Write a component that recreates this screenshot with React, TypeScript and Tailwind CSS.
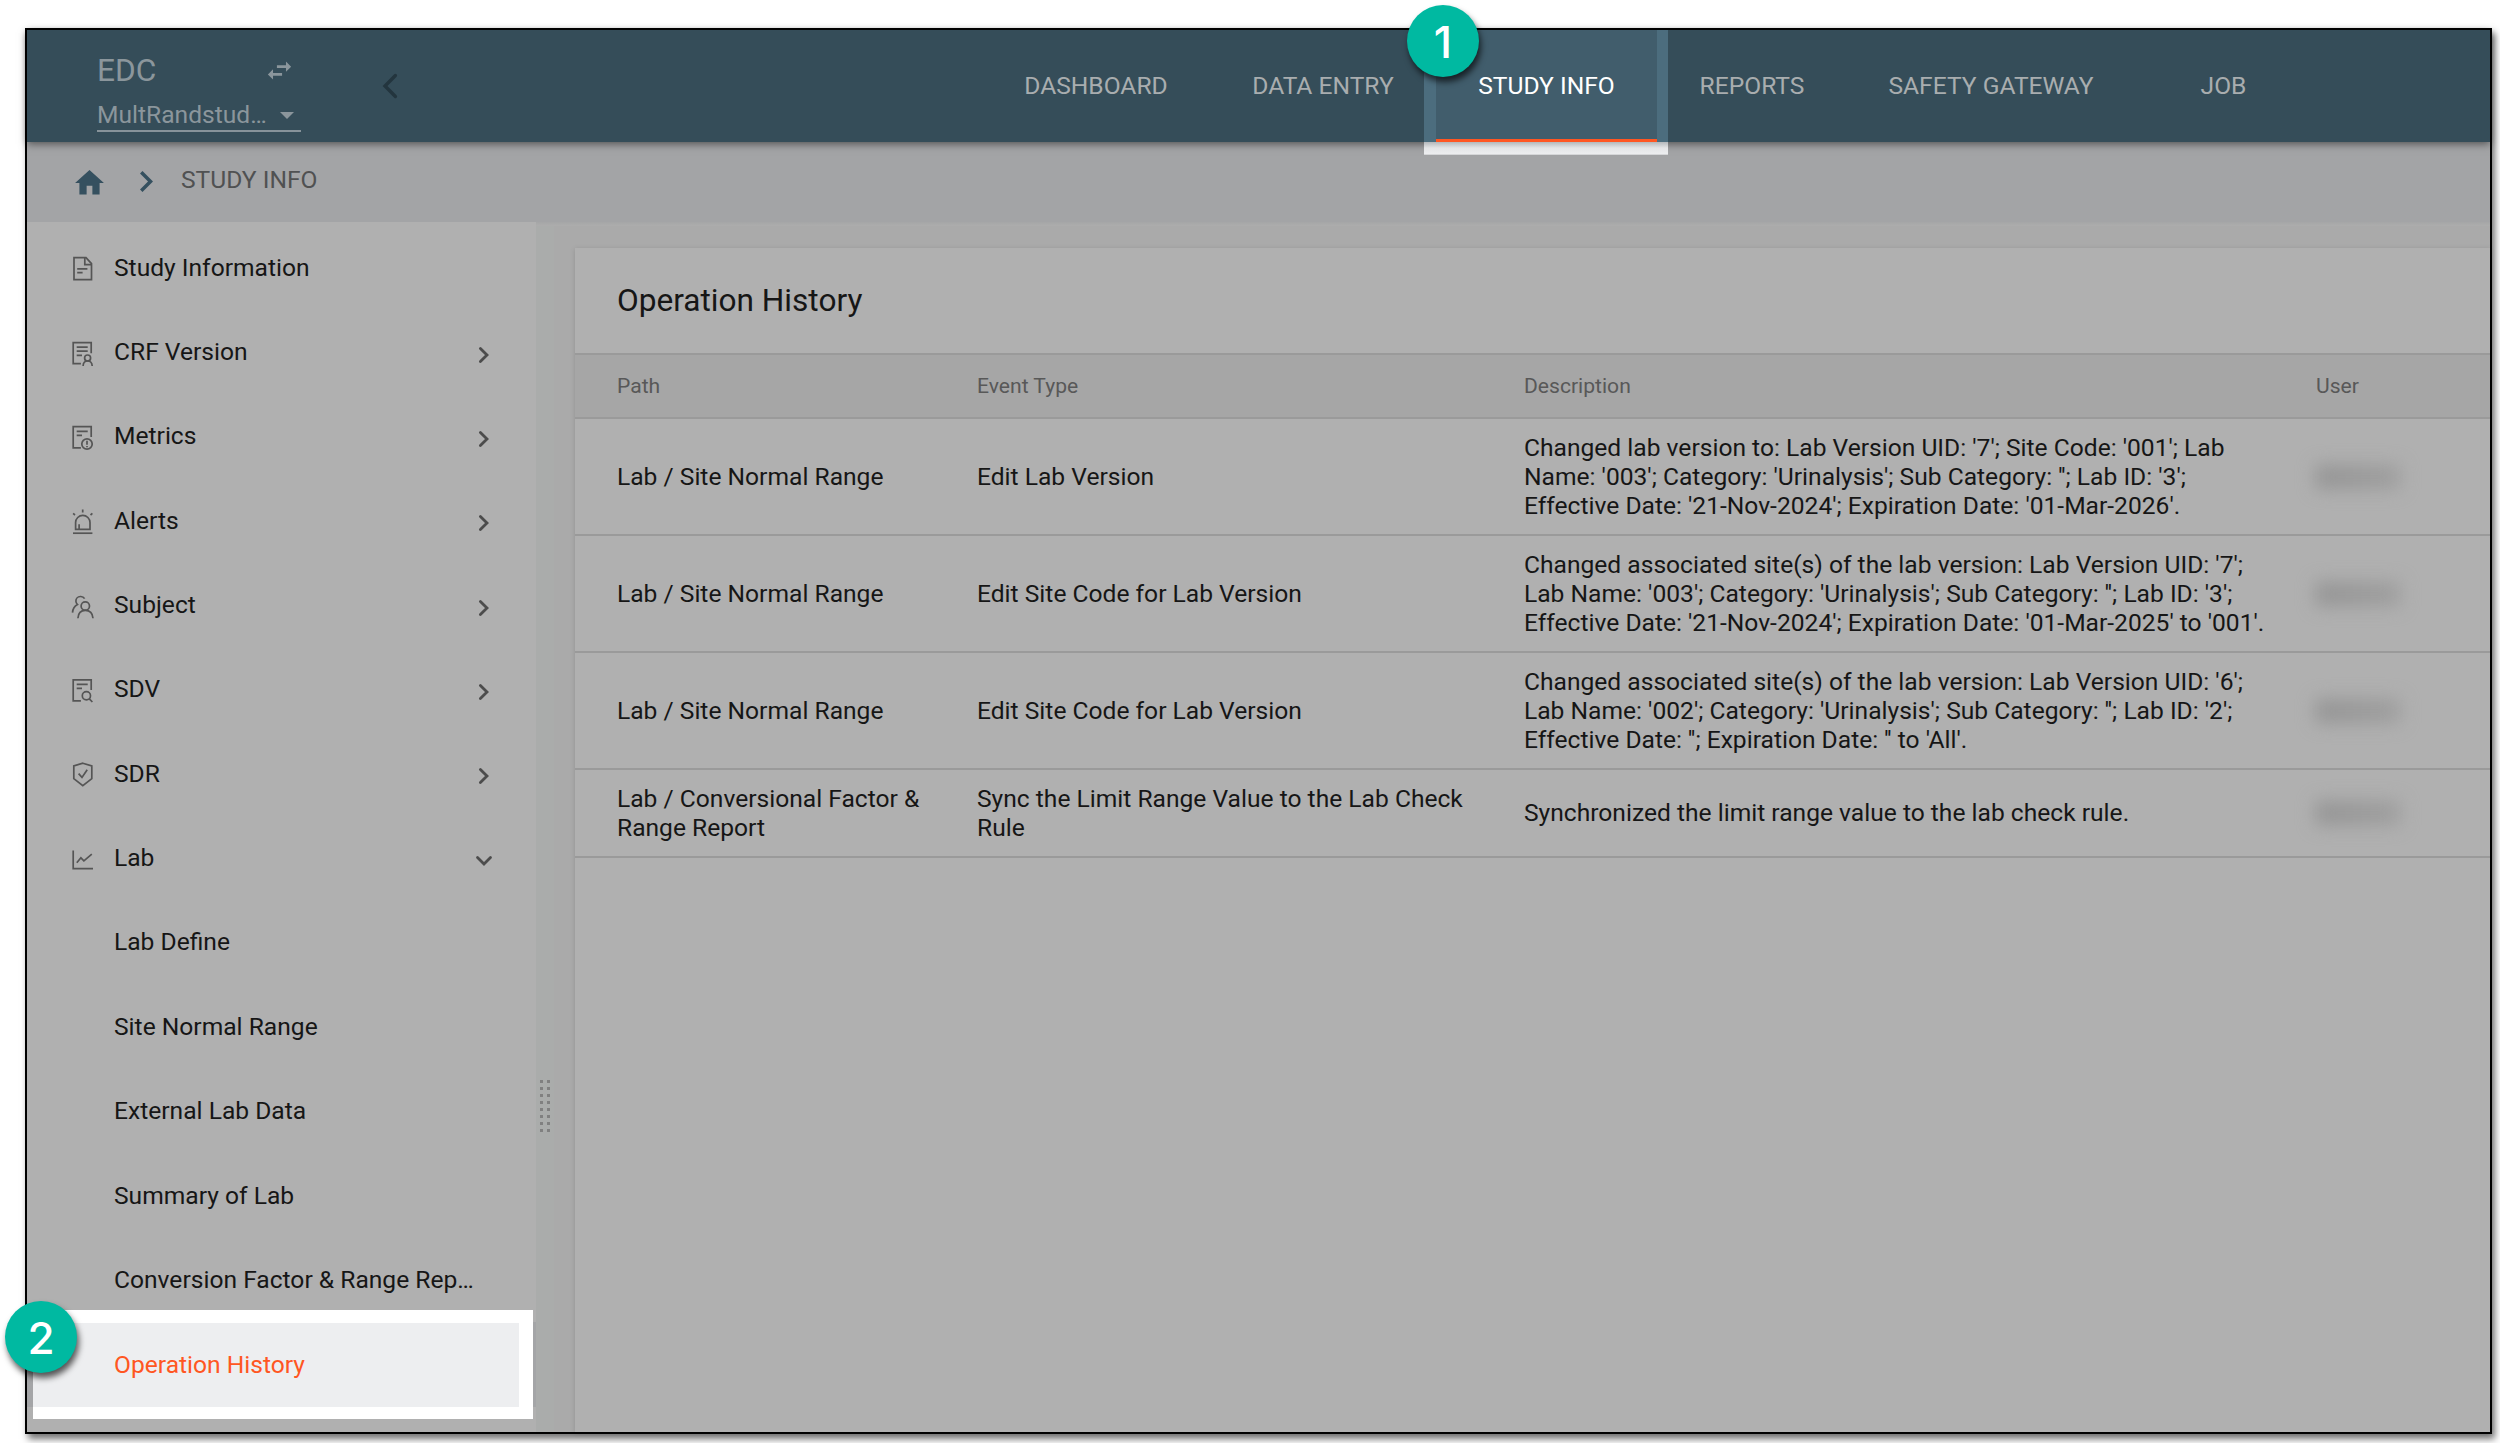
import type { ReactNode } from "react";

const navTabs = [
  { label: "DASHBOARD", width: "w-[228px]" },
  { label: "DATA ENTRY", width: "w-[226px]" },
  { label: "STUDY INFO", width: "w-[221px]", active: true },
  { label: "REPORTS", width: "w-[190px]" },
  { label: "SAFETY GATEWAY", width: "w-[288px]" },
  { label: "JOB", width: "w-[177px]" },
];

const icons: Record<string, ReactNode> = {
  document: (
    <>
      <path d="M3 3.7H15L20.5 9.7V25.6H3Z" />
      <path d="M13.8 3.9V10.6H20.3" />
      <path d="M6.2 14.8H16.4M6.2 18.6H11.6" />
    </>
  ),
  crf: (
    <>
      <path d="M20.2 14.2V3.6H2.2V24.6H9.9" />
      <path d="M5.7 8.2H16.7M5.7 12.2H16.7M5.7 16.3H11" />
      <circle cx="16.6" cy="19" r="3" />
      <path d="M12.1 27C12.2 23.6 14 22 16.6 22S21 23.6 21.2 27" />
    </>
  ),
  metrics: (
    <>
      <path d="M20.2 14V3.6H2.2V24.8H9.9" />
      <path d="M5.7 8.3H16.7M5.7 12.4H11" />
      <circle cx="16" cy="21" r="5.2" />
      <path d="M16 17.8V21.7M16 22.9V24.3" />
    </>
  ),
  alerts: (
    <>
      <path d="M2 26.2H21.4" />
      <path d="M4.6 22.4V15.6A7.2 7.2 0 0 1 19 15.6V22.4Z" />
      <path d="M8.1 17.2V22M11.7 2.6V5.6M2.1 6.4L4 8M21.4 6.4L19.5 8" />
    </>
  ),
  subject: (
    <>
      <path d="M13.6 6.6C12.6 4.9 10.9 4.4 9.4 4.5C6.6 4.7 4.8 6.8 4.9 9.2C5 10.6 5.6 11.7 6.5 12.6C3.6 14.2 1.8 17 1.5 20.6" />
      <circle cx="14.3" cy="14" r="4.2" />
      <path d="M6.9 26.2C7.2 21.2 10 18.3 14.3 18.3S21.6 21.2 22 26.2" />
    </>
  ),
  sdv: (
    <>
      <path d="M20.2 14V3.8H2.2V24.8H9.9" />
      <path d="M5.7 8.4H16.7M5.7 12.4H11" />
      <circle cx="15.4" cy="19.8" r="4.1" />
      <path d="M18.3 22.8L21.4 26" />
    </>
  ),
  sdr: (
    <>
      <path d="M11.8 3.2L20.8 6V18.6L11.8 25.7L2.8 18.6V6Z" />
      <path d="M7.6 13.6L11 17.4L16.2 9.8" />
    </>
  ),
  lab: (
    <>
      <path d="M2.2 5.6V23.6H22" />
      <path d="M5.8 17.8L9.9 12.8L12.9 15.8L20.8 9.2" />
    </>
  ),
};

const menu = [
  { label: "Study Information", icon: "document" },
  { label: "CRF Version", icon: "crf", arrow: "right" },
  { label: "Metrics", icon: "metrics", arrow: "right" },
  { label: "Alerts", icon: "alerts", arrow: "right" },
  { label: "Subject", icon: "subject", arrow: "right" },
  { label: "SDV", icon: "sdv", arrow: "right" },
  { label: "SDR", icon: "sdr", arrow: "right" },
  { label: "Lab", icon: "lab", arrow: "down" },
  { label: "Lab Define" },
  { label: "Site Normal Range" },
  { label: "External Lab Data" },
  { label: "Summary of Lab" },
  { label: "Conversion Factor & Range Rep…" },
];

const rows = [
  {
    path: "Lab / Site Normal Range",
    event: "Edit Lab Version",
    description:
      "Changed lab version to: Lab Version UID: '7'; Site Code: '001'; Lab Name: '003'; Category: 'Urinalysis'; Sub Category: ''; Lab ID: '3'; Effective Date: '21-Nov-2024'; Expiration Date: '01-Mar-2026'.",
  },
  {
    path: "Lab / Site Normal Range",
    event: "Edit Site Code for Lab Version",
    description:
      "Changed associated site(s) of the lab version: Lab Version UID: '7'; Lab Name: '003'; Category: 'Urinalysis'; Sub Category: ''; Lab ID: '3'; Effective Date: '21-Nov-2024'; Expiration Date: '01-Mar-2025' to '001'.",
  },
  {
    path: "Lab / Site Normal Range",
    event: "Edit Site Code for Lab Version",
    description:
      "Changed associated site(s) of the lab version: Lab Version UID: '6'; Lab Name: '002'; Category: 'Urinalysis'; Sub Category: ''; Lab ID: '2'; Effective Date: ''; Expiration Date: '' to 'All'.",
  },
  {
    path: "Lab / Conversional Factor & Range Report",
    event: "Sync the Limit Range Value to the Lab Check Rule",
    description: "Synchronized the limit range value to the lab check rule.",
  },
];

function StepBadge({ children, className }: { children: ReactNode; className: string }) {
  return (
    <div
      className={`absolute z-30 flex size-[72px] items-center justify-center rounded-full bg-[#00b9a1] pt-[2px] font-['Inter'] text-[44px] font-medium leading-none text-white shadow-[2px_5px_6px_rgba(0,0,0,0.65)] ${className}`}
    >
      {children}
    </div>
  );
}

function Header() {
  return (
    <header className="relative z-10 flex h-[112px] shrink-0 bg-[#354d59] shadow-[0_2px_8px_rgba(0,0,0,0.5)]">
      <div className="ml-[70px] mt-[20px] w-[204px] text-[#8b969c]">
        <div className="flex h-[41px] items-center justify-between">
          <span className="text-[31.6px] leading-none">EDC</span>
          <svg viewBox="0 0 24 24" className="mr-[6px] size-[31px] fill-current">
            <path d="M6.99 11L3 15l3.99 4v-3H14v-2H6.99v-3zM21 9l-3.99-4v3H10v2h7.01v3L21 9z" />
          </svg>
        </div>
        <div className="mt-[7px] flex h-[34px] items-center justify-between border-b-2 border-[#87939a] pt-[2px]">
          <span className="text-[24.6px] leading-none">MultRandstud…</span>
          <svg viewBox="0 0 14 7" className="mr-[7px] h-[7px] w-[14px] fill-current">
            <path d="M0 0H14L7 7Z" />
          </svg>
        </div>
      </div>
      <svg
        viewBox="0 0 16 26"
        className="ml-[81px] mt-[43px] h-[26px] w-4 fill-none stroke-[#23353e] stroke-[3.4]"
        strokeLinecap="round"
      >
        <path d="M13.4 2.5L3 13L13.4 23.5" />
      </svg>
      <nav className="ml-[584px] flex">
        {navTabs.map((tab) =>
          tab.active ? (
            <div key={tab.label} className={`relative ${tab.width}`}>
              <div className="absolute -left-3 top-0 h-[112px] w-[244px] bg-[#4c6d7e]" />
              <div className="absolute -left-3 top-[112px] h-[13px] w-[244px] border-b border-[#d5d6d8] bg-linear-to-b from-[#b4b8bb] via-[#e4e5e7] to-[#edeef0]" />
              <div className="relative flex h-[112px] items-center justify-center border-b-[3px] border-[#ff5622] bg-[#415d6c] pt-[3px] text-[24.6px] text-white">
                {tab.label}
              </div>
            </div>
          ) : (
            <div
              key={tab.label}
              className={`flex items-center justify-center text-[24.6px] text-[#a9adaf] ${tab.width}`}
            >
              {tab.label}
            </div>
          )
        )}
      </nav>
    </header>
  );
}

function Breadcrumb() {
  return (
    <div className="flex h-[80px] shrink-0 items-start bg-[#a3a4a6]">
      <svg viewBox="2 3 20 17" className="ml-[48px] mt-[28px] h-[24.5px] w-[29px] fill-[#35505f]">
        <path d="M10 20v-6h4v6h5v-8h3L12 3 2 12h3v8z" />
      </svg>
      <svg viewBox="8.59 6 7.41 12" className="ml-[36px] mt-[29px] h-[21px] w-[13px] fill-[#35505f]">
        <path d="M10 6 8.59 7.41 13.17 12l-4.58 4.59L10 18l6-6z" />
      </svg>
      <span className="ml-[28px] mt-[23px] text-[24.6px] leading-[29px] text-[#505152]">STUDY INFO</span>
    </div>
  );
}

function Sidebar() {
  return (
    <aside className="flex w-[509px] shrink-0 flex-col bg-[#b0b0b0] pt-[4px]">
      {menu.map((item) => (
        <div key={item.label} className="flex h-[84.35px] shrink-0 items-center">
          <div className="ml-[44px] w-[43px]">
            {item.icon && (
              <svg viewBox="0 0 24 28" className="h-7 w-6 fill-none stroke-[#555] stroke-[1.7]">
                {icons[item.icon]}
              </svg>
            )}
          </div>
          <span className="text-[24.6px] text-[#161616]">{item.label}</span>
          {item.arrow && (
            <svg
              viewBox="0 0 18 18"
              className="ml-auto mr-[43px] mt-[4px] size-[18px] fill-none stroke-[#4c4c4c] stroke-[2.8]"
              strokeLinecap="round"
            >
              {item.arrow === "right" ? <path d="M5.4 2.5L12 9L5.4 15.5" /> : <path d="M2.5 5.5L9 12L15.5 5.5" />}
            </svg>
          )}
        </div>
      ))}
      <div className="relative h-[84.4px] shrink-0 bg-[#a4a5a7]">
        <div className="absolute -top-3 left-[6px] flex h-[109px] w-[500px] items-center bg-white">
          <div className="flex h-[84.4px] w-[486px] items-center bg-[#edeef0] pl-[81px] text-[24.6px] text-[#ff5622]">
            Operation History
          </div>
        </div>
      </div>
    </aside>
  );
}

function Splitter() {
  return (
    <div className="w-[18px] shrink-0 bg-[#aaacab] pl-1 pt-[854px]">
      <div className="grid w-[10px] grid-cols-2 gap-x-[4px] gap-y-[4px]">
        {Array.from({ length: 16 }, (_, i) => (
          <span key={i} className="size-[3px] bg-[#808080]" />
        ))}
      </div>
    </div>
  );
}

function HistoryTable() {
  return (
    <section className="ml-[21px] mt-[22px] flex-1 bg-[#b0b0b0] shadow-[0_1px_5px_rgba(0,0,0,0.15)]">
      <h1 className="flex h-[105px] items-center pl-[42px] text-[31.6px] text-[#161616]">Operation History</h1>
      <table className="w-full table-fixed border-collapse text-left">
        <thead>
          <tr className="h-[64px] border-y-2 border-[#9a9a9a] bg-[#a6a6a6] text-[21.1px] text-[#585858]">
            <th className="w-[402px] pl-[42px] font-normal">Path</th>
            <th className="w-[547px] font-normal">Event Type</th>
            <th className="w-[792px] font-normal">Description</th>
            <th className="font-normal">User</th>
          </tr>
        </thead>
        <tbody>
          {rows.map((row, i) => (
            <tr
              key={i}
              className={`border-b-2 border-[#9a9a9a] text-[24.6px] leading-[29.1px] text-[#161616] ${
                i === 3 ? "h-[88px]" : "h-[117px]"
              }`}
            >
              <td className="pl-[42px] pr-[42px]">{row.path}</td>
              <td className="pr-[42px]">{row.event}</td>
              <td className="pr-[42px]">{row.description}</td>
              <td>
                <div className="h-[24px] w-[84px] bg-linear-to-r from-[#949494] to-[#9e9e9e] blur-[9px]" />
              </td>
            </tr>
          ))}
        </tbody>
      </table>
    </section>
  );
}

export default function App() {
  return (
    <div className="relative h-[1443px] w-[2500px] overflow-hidden bg-white pl-[25px] pt-[28px] font-['Roboto',sans-serif]">
      <div className="flex h-[1406px] w-[2467px] flex-col border-2 border-black bg-[#aaaaaa] shadow-[3px_5px_7px_rgba(0,0,0,0.55)]">
        <Header />
        <Breadcrumb />
        <div className="h-[4px] shrink-0 bg-linear-to-b from-[#a5a6a7] to-[#adadad]" />
        <div className="flex min-h-0 flex-1">
          <div className="-mt-[4px] flex">
            <Sidebar />
          </div>
          <Splitter />
          <HistoryTable />
        </div>
      </div>
      <StepBadge className="left-[1407px] top-[5px]">1</StepBadge>
      <StepBadge className="left-[5px] top-[1301px]">2</StepBadge>
    </div>
  );
}
